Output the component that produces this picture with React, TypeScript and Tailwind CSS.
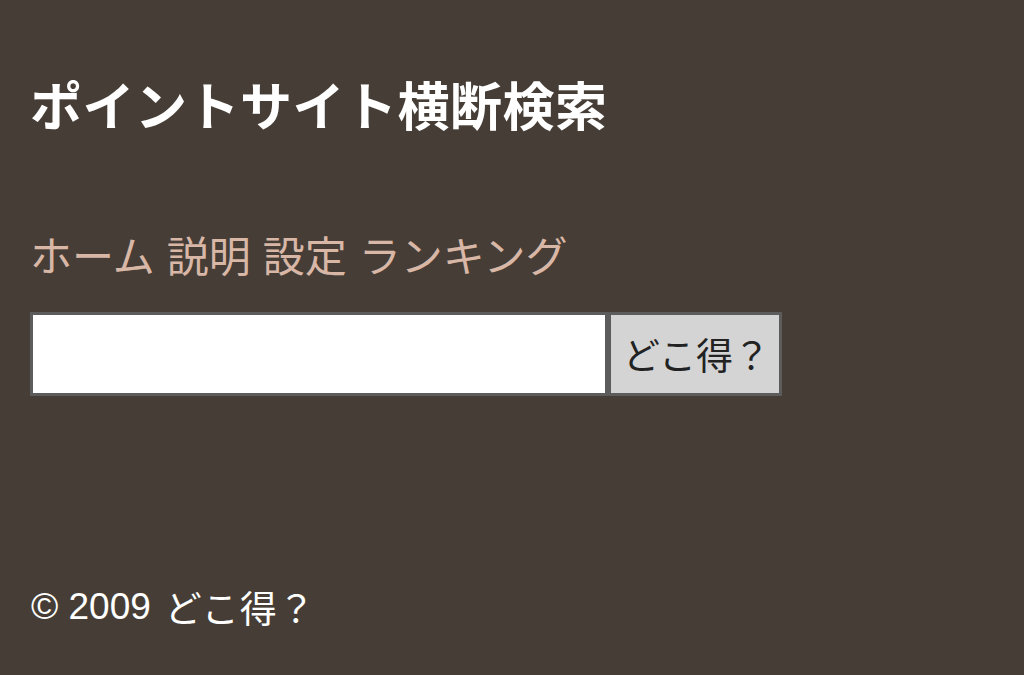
export default function App() {
  return (
    <div
      className="min-h-screen w-full bg-[#463e36] text-white"
      style={{ fontFamily: '"Noto Sans CJK JP", "Noto Sans", sans-serif' }}
    >
      <div className="flex flex-col px-[30px] pt-[75px]">
        <h1 className="text-[52px] font-bold leading-[58px] tracking-[0.5px]">ポイントサイト横断検索</h1>

        <nav className="mt-[96px] flex gap-[12px] text-[42px] leading-[50px] text-[#d9b7a7]">
          <a href="#">ホーム</a>
          <a href="#">説明</a>
          <a href="#">設定</a>
          <a href="#">ランキング</a>
        </nav>

        <form className="mt-[33px] flex h-[84px]" onSubmit={(e) => e.preventDefault()}>
          <input
            type="text"
            className="h-full w-[578px] border-[3px] border-[#5c5c5c] bg-white px-2 text-[34px] text-black outline-none"
          />
          <button
            type="submit"
            className="h-full w-[174px] border-[3px] border-[#5c5c5c] bg-[#d4d4d4] pl-[3px] text-[37px] leading-none text-[#222]"
          >
            どこ得？
          </button>
        </form>

        <footer className="mt-[189px] flex text-[37px] leading-[44px]">
          <span className="ml-[1px]" style={{ fontFamily: '"Liberation Sans", Arial, sans-serif' }}>© 2009</span>
          <span className="ml-[14px] tracking-[1px]">どこ得？</span>
        </footer>
      </div>
    </div>
  )
}
